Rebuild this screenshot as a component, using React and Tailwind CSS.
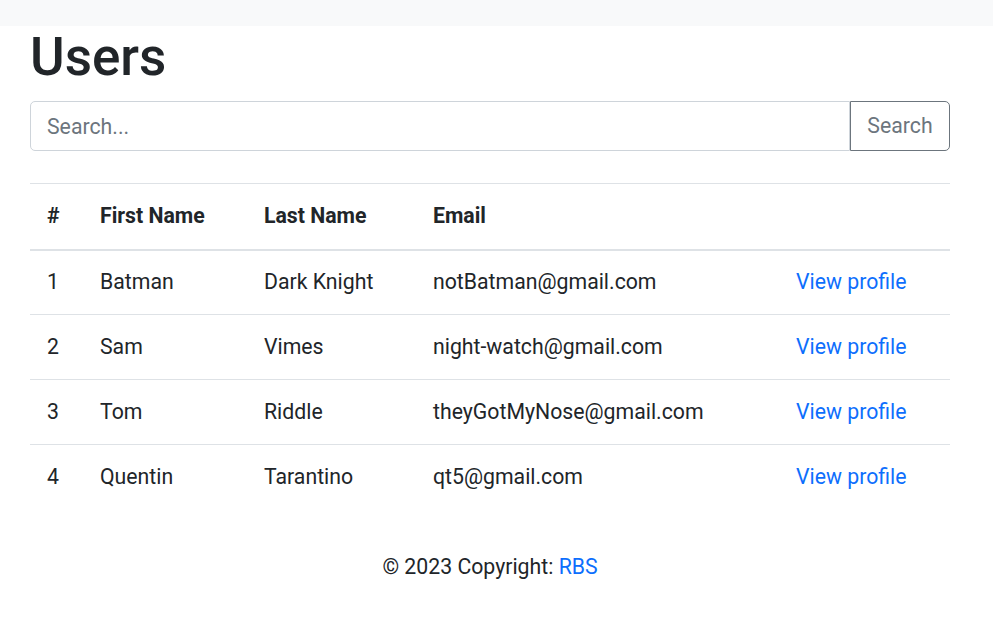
import React from 'react'

const users = [
  { id: 1, firstName: 'Batman', lastName: 'Dark Knight', email: 'notBatman@gmail.com' },
  { id: 2, firstName: 'Sam', lastName: 'Vimes', email: 'night-watch@gmail.com' },
  { id: 3, firstName: 'Tom', lastName: 'Riddle', email: 'theyGotMyNose@gmail.com' },
  { id: 4, firstName: 'Quentin', lastName: 'Tarantino', email: 'qt5@gmail.com' },
]

export default function App() {
  return (
    <div className="min-h-screen bg-white text-[#212529] text-[21.25px] font-['Roboto',sans-serif]">
      <nav className="h-[26px] bg-[#f8f9fa]" />

      <div className="mx-[30px] w-[920px]">
        <h1 className="text-[53px] font-medium leading-[63px]">Users</h1>

        <form className="flex mt-[12px]" onSubmit={(e) => e.preventDefault()}>
          <input
            type="text"
            placeholder="Search..."
            className="flex-1 h-[50px] px-[16px] border border-[#ced4da] rounded-l-[5px] text-[21.25px] placeholder:text-[#6c757d] outline-none"
          />
          <button
            type="submit"
            className="h-[50px] w-[100px] border border-[#6c757d] rounded-r-[5px] text-[#6c757d] text-[21.25px]"
          >
            Search
          </button>
        </form>

        {/* Table */}
        <table className="w-full mt-[32px] border-t border-[#dee2e6] border-collapse">
          <thead>
            <tr className="h-[66px] border-b-2 border-[#dee2e6] text-left">
              <th className="w-[53px] px-[17px] font-bold">#</th>
              <th className="w-[164px] px-[17px] font-bold">First Name</th>
              <th className="w-[169px] px-[17px] font-bold">Last Name</th>
              <th className="w-[363px] px-[17px] font-bold">Email</th>
              <th className="px-[17px]"></th>
            </tr>
          </thead>
          <tbody>
            {users.map((user, i) => (
              <tr
                key={user.id}
                className={`h-[65px] ${i < users.length - 1 ? 'border-b border-[#dee2e6]' : ''}`}
              >
                <td className="px-[17px]">{user.id}</td>
                <td className="px-[17px]">{user.firstName}</td>
                <td className="px-[17px]">{user.lastName}</td>
                <td className="px-[17px]">{user.email}</td>
                <td className="px-[17px]">
                  <a href="#" className="text-[#0d6efd]">View profile</a>
                </td>
              </tr>
            ))}
          </tbody>
        </table>

        <footer className="mt-[41px] text-center leading-[32px]">
          © 2023 Copyright: <a href="#" className="text-[#0d6efd]">RBS</a>
        </footer>
      </div>
    </div>
  )
}
